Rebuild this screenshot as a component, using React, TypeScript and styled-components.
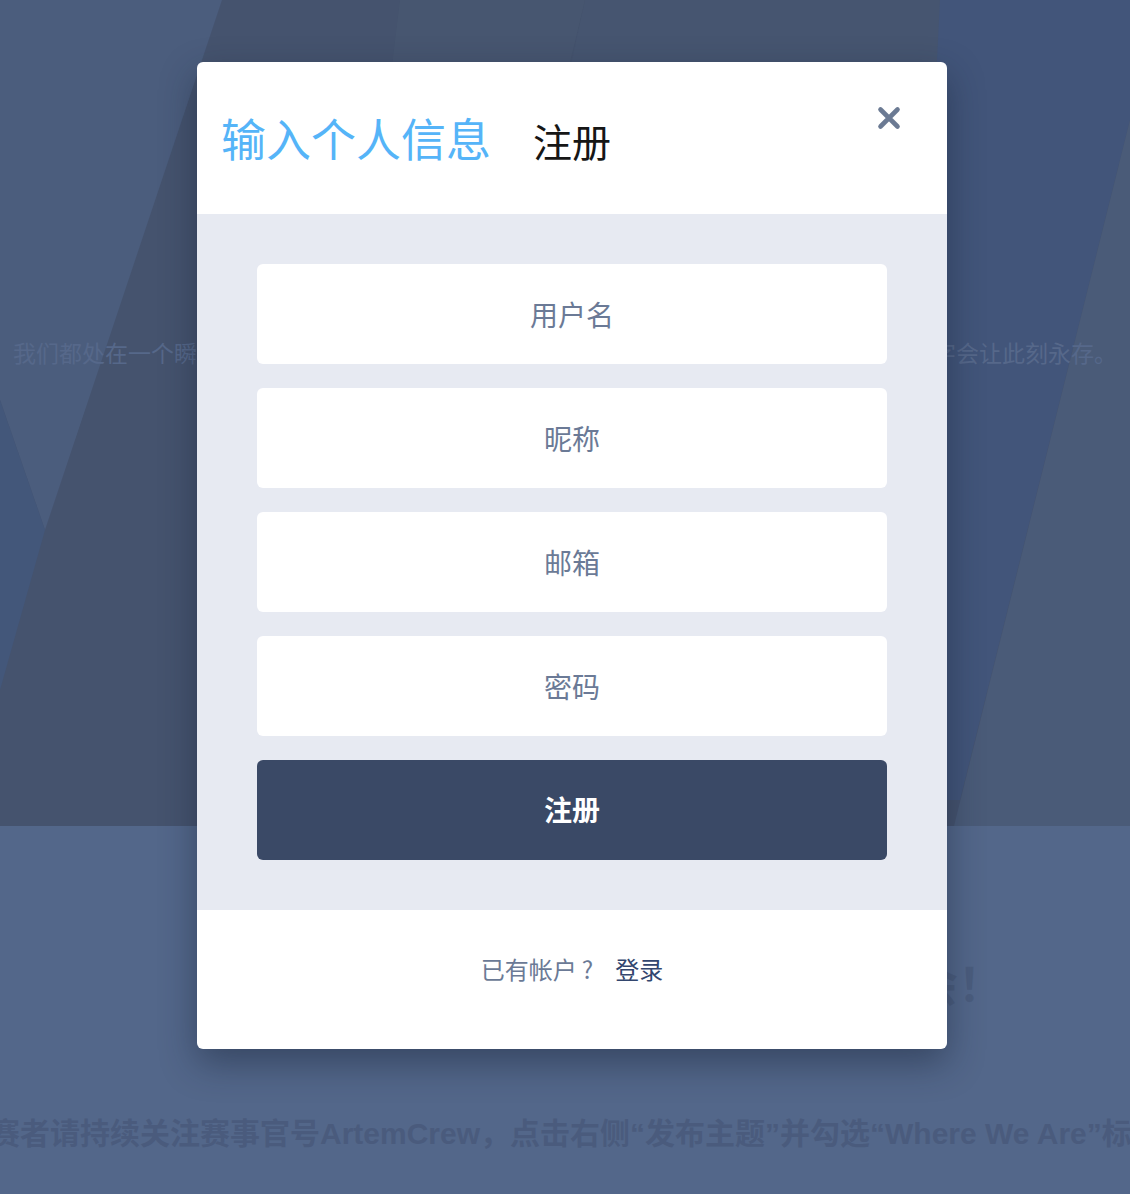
import styled, { createGlobalStyle } from "styled-components";
import { useState } from "react";

/* ------------------- 디자인 ------------------- */
const GlobalStyle = createGlobalStyle`
    html, body {
        margin: 0;
        padding: 0;
        background: #53678a;
    }
    body {
        font-family: "Noto Sans CJK SC", "Noto Sans", sans-serif;
        overflow: hidden;
    }
    * { box-sizing: border-box; }
`;

const Page = styled.div`
    position: relative;
    width: 1130px;
    height: 1194px;
    overflow: hidden;
`;

const Hero = styled.section`
    position: relative;
    height: 826px;
    background-color: #45536e;
    display: flex;
    flex-direction: column;
    padding-top: 334px;
`;

const HeroArt = styled.svg`
    position: absolute;
    inset: 0;
    width: 100%;
    height: 100%;
`;

const HeroText = styled.p`
    position: relative;
    margin: 0;
    text-align: center;
    white-space: nowrap;
    font-size: 23px;
    line-height: 36px;
    color: #56688a;
`;

const Lower = styled.section`
    height: 368px;
    background-color: #53678a;
    display: flex;
    flex-direction: column;
    align-items: center;
    padding-top: 120px;
`;

const BigTitle = styled.h2`
    margin: 0;
    width: 100%;
    text-align: right;
    white-space: nowrap;
    font-size: 46px;
    line-height: 70px;
    font-weight: 700;
    color: #4b5d7e;
    padding-right: 126px;
`;

const Notice = styled.p`
    margin: 98px 0 0;
    width: 100%;
    white-space: nowrap;
    text-indent: -40px;
    font-family: "Liberation Sans", "Noto Sans CJK SC", sans-serif;
    font-size: 30px;
    line-height: 40px;
    font-weight: 700;
    color: #4a5b7d;
`;

const Overlay = styled.div`
    position: absolute;
    inset: 0;
    display: flex;
    justify-content: center;
    align-items: flex-start;
    padding: 62px 0 0 14px;
`;

const Modal = styled.form`
    width: 750px;
    background: #ffffff;
    border-radius: 6px;
    overflow: hidden;
    box-shadow: 0 14px 36px rgba(20, 30, 50, 0.45);
    display: flex;
    flex-direction: column;
`;

const Header = styled.div`
    height: 152px;
    display: flex;
    align-items: center;
    padding: 0 44px 0 24px;
`;

const TitleRow = styled.div`
    display: flex;
    align-items: baseline;
    gap: 42px;
    margin-top: -2px;
`;

const MainTitle = styled.h1`
    margin: 0;
    font-size: 45px;
    font-weight: 400;
    color: #55b4f8;
    line-height: 1;
`;

const SubTitle = styled.span`
    font-size: 39px;
    font-weight: 400;
    color: #161616;
    line-height: 1;
`;

const CloseBtn = styled.button`
    margin-left: auto;
    align-self: flex-start;
    margin-top: 42px;
    width: 28px;
    height: 28px;
    padding: 0;
    border: none;
    background: transparent;
    cursor: pointer;
    display: flex;
    align-items: center;
    justify-content: center;
`;

const Body = styled.div`
    background: #e7eaf2;
    padding: 50px 60px;
    display: flex;
    flex-direction: column;
    gap: 24px;
`;

const Field = styled.input`
    height: 100px;
    border: none;
    border-radius: 6px;
    background: #ffffff;
    text-align: center;
    font-family: "Noto Sans CJK SC", "Noto Sans", sans-serif;
    font-size: 28px;
    color: #3a4966;
    outline: none;
    &::placeholder {
        color: #6b7a96;
    }
`;

const SubmitBtn = styled.button`
    height: 100px;
    border: none;
    border-radius: 6px;
    background: #3a4966;
    color: #ffffff;
    font-family: "Noto Sans CJK SC", "Noto Sans", sans-serif;
    font-size: 28px;
    font-weight: 700;
    cursor: pointer;
    padding-bottom: 4px;
`;

const Footer = styled.div`
    height: 139px;
    display: flex;
    align-items: center;
    justify-content: center;
    gap: 22px;
    padding-bottom: 22px;
    font-size: 24px;
    color: #6b7a96;
`;

const Question = styled.span`
    margin-left: 5px;
`;

const LoginLink = styled.a`
    color: #33466e;
    text-decoration: none;
    cursor: pointer;
`;

/* ------------------- 컴포넌트 ------------------- */
export default function App() {
    const [form, setForm] = useState({ username: "", nickname: "", email: "", password: "" });

    const onChange = (e: React.ChangeEvent<HTMLInputElement>) => {
        setForm({ ...form, [e.target.name]: e.target.value });
    };

    const onSubmit = (e: React.FormEvent<HTMLFormElement>) => {
        e.preventDefault();
    };

    return (
        <>
            <GlobalStyle />
            <Page>
                <Hero>
                    <HeroArt viewBox="0 0 1130 826" preserveAspectRatio="none">
                        <polygon points="0,0 222,0 45,530 0,400" fill="#4b5d7d" />
                        <polygon points="0,400 45,530 0,690" fill="#43577a" />
                        <polygon points="400,0 585,0 505,330 360,330" fill="#495871" opacity="0.7" />
                        <polygon points="585,0 960,0 900,300 520,300" fill="#475772" opacity="0.5" />
                        <polygon points="940,0 1130,0 1130,120 960,800 900,800" fill="#42557a" />
                        <polygon points="1130,120 1130,826 954,826" fill="#4a5b78" />
                    </HeroArt>
                    <HeroText>我们都处在一个瞬息万变的时代，每一次按下快门都是与世界的对话，而你手中的镜头与文字会让此刻永存。</HeroText>
                </Hero>
                <Lower>
                    <BigTitle>Where We Are 主题创作大会！</BigTitle>
                    <Notice>参赛者请持续关注赛事官号ArtemCrew，点击右侧“发布主题”并勾选“Where We Are”标签参与活动</Notice>
                </Lower>

                <Overlay>
                    <Modal onSubmit={onSubmit}>
                        <Header>
                            <TitleRow>
                                <MainTitle>输入个人信息</MainTitle>
                                <SubTitle>注册</SubTitle>
                            </TitleRow>
                            <CloseBtn type="button" aria-label="关闭">
                                <svg width="24" height="24" viewBox="0 0 24 24">
                                    <path d="M3.5 3.5 L20.5 20.5 M20.5 3.5 L3.5 20.5" stroke="#6b7a93" strokeWidth="4.6" strokeLinecap="round" />
                                </svg>
                            </CloseBtn>
                        </Header>
                        <Body>
                            <Field name="username" placeholder="用户名" value={form.username} onChange={onChange} />
                            <Field name="nickname" placeholder="昵称" value={form.nickname} onChange={onChange} />
                            <Field name="email" placeholder="邮箱" value={form.email} onChange={onChange} />
                            <Field name="password" type="password" placeholder="密码" value={form.password} onChange={onChange} />
                            <SubmitBtn type="submit">注册</SubmitBtn>
                        </Body>
                        <Footer>
                            <span>已有帐户<Question>?</Question></span>
                            <LoginLink>登录</LoginLink>
                        </Footer>
                    </Modal>
                </Overlay>
            </Page>
        </>
    );
}
